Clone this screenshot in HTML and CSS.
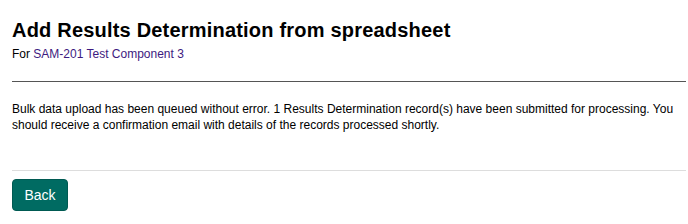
FILE: index.html
```html
<!DOCTYPE html>
<html>
<head>
<meta charset="utf-8">
<link rel="stylesheet" href="styles.css">
</head>
<body>
<div class="page">
  <h1 class="title">Add Results Determination from spreadsheet</h1>
  <p class="subtitle">For <a class="link" href="#">SAM-201 Test Component 3</a></p>
  <hr class="rule">
  <p class="message">Bulk data upload has been queued without error. 1 Results Determination record(s) have been submitted for processing. You should receive a confirmation email with details of the records processed shortly.</p>
  <div class="actions">
    <button class="btn" type="button">Back</button>
  </div>
</div>
</body>
</html>
```
FILE: styles.css
```css
html, body {
  margin: 0;
  padding: 0;
  background: #fff;
}
body {
  font-family: "Liberation Sans", Arial, sans-serif;
  color: #000;
}
.page {
  padding: 18px 2px 0 12px;
}
.title {
  margin: 0;
  font-size: 20px;
  line-height: 24px;
  font-weight: bold;
  letter-spacing: 0.2px;
}
.subtitle {
  margin: 4px 0 0;
  font-size: 12px;
  line-height: 16px;
}
.link {
  color: #3d1a80;
  text-decoration: none;
}
.rule {
  margin: 19px 0 0;
  border: 0;
  border-top: 1px solid #555;
  height: 0;
}
.message {
  margin: 19px 0 0;
  font-size: 12px;
  line-height: 16px;
  padding-right: 10px;
}
.actions {
  margin-top: 37px;
  border-top: 1px solid #ddd;
  padding-top: 8px;
}
.btn {
  font-family: "Liberation Sans", Arial, sans-serif;
  font-size: 14px;
  color: #fff;
  background: #006b62;
  border: 1px solid #005a52;
  border-radius: 4px;
  width: 56px;
  height: 32px;
  padding: 0;
  cursor: pointer;
}
```
